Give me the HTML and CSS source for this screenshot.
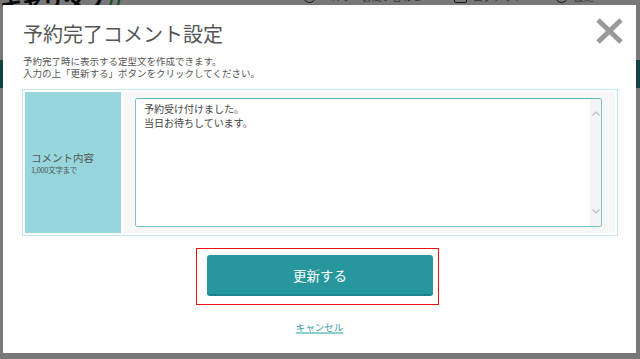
FILE: index.html
```html
<!DOCTYPE html>
<html lang="ja">
<head>
  <meta charset="UTF-8">
  <meta name="viewport" content="width=device-width, initial-scale=1.0">
  <title>予約完了コメント設定</title>
  <link rel="stylesheet" href="styles.css">
</head>
<body>
  <!-- Page behind the modal -->
  <div class="page">
    <header class="site-header">
      <div class="logo">キャリタブ<span class="logo-mark">//</span></div>
      <div class="header-menu">
        <span class="menu-icon"></span><span class="menu-text">ヘルプ・お問い合わせ</span>
        <span class="menu-icon square"></span><span class="menu-text">ログアウト</span>
        <span class="menu-icon"></span><span class="menu-text">設定</span>
      </div>
    </header>
    <nav class="site-nav"></nav>
  </div>

  <!-- Comment Modal -->
  <div class="overlay">
    <div class="modal">
      <button class="modal-close" aria-label="閉じる">
        <svg width="27" height="26" viewBox="0 0 27 26">
          <path d="M2 2 L25 24 M25 2 L2 24" stroke="#9a9a9a" stroke-width="5" fill="none"/>
        </svg>
      </button>

      <h2 class="modal-title">予約完了コメント設定</h2>
      <p class="modal-lead">予約完了時に表示する定型文を作成できます。<br>入力の上「更新する」ボタンをクリックしてください。</p>

      <table class="form-table">
        <tr>
          <th>コメント内容<small>1,000文字まで</small></th>
          <td>
            <div class="textbox">
              <textarea name="comment">予約受け付けました。
当日お待ちしています。</textarea>
              <div class="scrollbar">
                <svg width="8" height="5" viewBox="0 0 8 5"><path d="M0.5 4.5 L4 1 L7.5 4.5" stroke="#bbb" stroke-width="1.2" fill="none"/></svg>
                <svg width="8" height="5" viewBox="0 0 8 5"><path d="M0.5 0.5 L4 4 L7.5 0.5" stroke="#bbb" stroke-width="1.2" fill="none"/></svg>
              </div>
            </div>
          </td>
        </tr>
      </table>

      <div class="actions">
        <div class="highlight">
          <button class="btn-update" type="submit">更新する</button>
        </div>
        <a class="cancel" href="#">キャンセル</a>
      </div>
    </div>
  </div>
</body>
</html>
```

FILE: styles.css
```css
/* General Styles */
body {
  margin: 0;
  font-family: "Noto Sans CJK JP", "Noto Sans", sans-serif;
  color: #555;
  background-color: #fff;
  overflow: hidden;
}

/* Page behind */
.site-header {
  height: 60px;
  display: flex;
  justify-content: space-between;
  align-items: flex-start;
}

.logo {
  margin-top: -17px;
  font-size: 22px;
  font-weight: 700;
  color: #111;
  letter-spacing: -1px;
}

.logo-mark {
  color: #2fa35a;
  margin-left: 2px;
}

.header-menu {
  display: flex;
  align-items: center;
  gap: 6px;
  margin-top: -11px;
  padding-right: 20px;
  font-size: 10px;
  color: #777;
}

.menu-icon {
  width: 11px;
  height: 11px;
  border: 1px solid #333;
  border-radius: 50%;
}

.menu-icon.square {
  border-radius: 2px;
}

.menu-text {
  margin-right: 26px;
}

.site-nav {
  height: 28px;
  background-color: #2b8f94;
}

/* Overlay */
.overlay {
  position: fixed;
  inset: 0;
  background-color: rgba(0, 0, 0, 0.53);
}

.modal {
  position: absolute;
  left: 3px;
  top: 5px;
  width: 633px;
  height: 348px;
  box-sizing: border-box;
  padding: 16px 19px 0 19px;
  background-color: #fff;
}

.modal-close {
  position: absolute;
  top: 13px;
  right: 13px;
  padding: 0;
  border: none;
  background: none;
  cursor: pointer;
  line-height: 0;
}

.modal-title {
  margin: 0 0 0 1px;
  font-size: 20px;
  line-height: 26px;
  font-weight: 400;
  color: #555;
}

.modal-lead {
  margin: 8px 0 0 1px;
  font-size: 9.5px;
  line-height: 12px;
  color: #555;
}

/* Form table */
.form-table {
  width: 596px;
  margin-top: 10px;
  border: 1px solid #c6e9ed;
  border-spacing: 2px;
}

.form-table th {
  width: 90px;
  height: 141px;
  padding: 0 0 0 6px;
  background-color: #96d6dc;
  text-align: left;
  vertical-align: middle;
  font-size: 10.5px;
  line-height: 13px;
  font-weight: 400;
  color: #555;
}

.form-table th small {
  display: block;
  font-size: 7.5px;
  line-height: 11px;
  letter-spacing: -0.3px;
}

.form-table td {
  padding: 6px 13px 6px 12px;
  background-color: #f7f7f7;
}

.textbox {
  display: flex;
  height: 129px;
  box-sizing: border-box;
  border: 1px solid #7cc3c6;
  border-top-color: #6ab8bc;
  border-radius: 3px;
  background-color: #fff;
  overflow: hidden;
}

.textbox textarea {
  flex: 1;
  margin: 0;
  padding: 3px 8px;
  border: none;
  outline: none;
  resize: none;
  font-family: "Noto Sans CJK JP", "Noto Sans", sans-serif;
  font-size: 10px;
  line-height: 14px;
  color: #444;
}

.scrollbar {
  width: 11px;
  background-color: #f4f4f4;
  display: flex;
  flex-direction: column;
  justify-content: space-between;
  align-items: center;
  padding: 12px 0;
}

/* Actions */
.actions {
  display: flex;
  flex-direction: column;
  align-items: center;
}

.highlight {
  margin-top: 12px;
  margin-right: 4px;
  padding: 6px 5px 8px 10px;
  border: 1px solid #ee1111;
}

.btn-update {
  display: block;
  width: 226px;
  height: 41px;
  border: none;
  border-bottom: 2px solid #1c8388;
  border-radius: 3px;
  background-color: #26979c;
  color: #fff;
  font-family: "Noto Sans CJK JP", "Noto Sans", sans-serif;
  font-size: 13.5px;
  cursor: pointer;
}

.cancel {
  margin-top: 15px;
  font-size: 9.5px;
  line-height: 14px;
  color: #3a9ea3;
  text-decoration: underline;
  text-decoration-color: #8fd0d3;
  text-decoration-thickness: 2px;
}
```
